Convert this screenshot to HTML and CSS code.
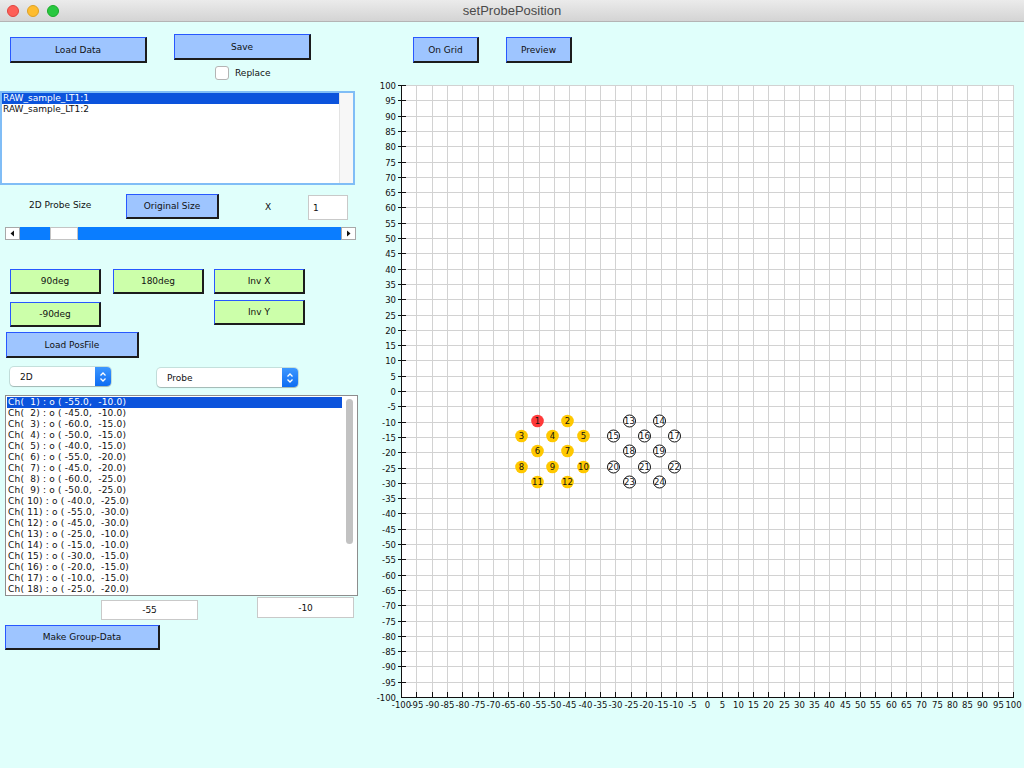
FILE: index.html
```html
<!DOCTYPE html>
<html>
<head>
<meta charset="utf-8">
<title>setProbePosition</title>
<link rel="stylesheet" href="styles.css">
</head>
<body>
<header class="titlebar">
  <div class="lights"><span class="light red"></span><span class="light yellow"></span><span class="light green"></span></div>
  <div class="title">setProbePosition</div>
  <div></div>
</header>
<div class="main">
  <section class="left">
    <div class="row-top">
      <button class="btn blue b-load">Load Data</button>
      <div class="save-col">
        <button class="btn blue b-save">Save</button>
        <label class="check"><span class="box"></span>Replace</label>
      </div>
    </div>

    <div class="datalist">
      <div class="items">
        <div class="item sel">RAW_sample_LT1:1</div>
        <div class="item">RAW_sample_LT1:2</div>
      </div>
      <div class="vscroll"></div>
    </div>

    <div class="row-size">
      <div class="size-label">2D Probe Size</div>
      <button class="btn blue b-orig">Original Size</button>
      <div class="x-label">X</div>
      <div class="field f-scale">1</div>
    </div>

    <div class="slider">
      <div class="arrow"><svg width="5" height="7" viewBox="0 0 5 7"><path d="M4 0.5V6.5L0.5 3.5Z" fill="#111"/></svg></div>
      <div class="track"><div class="thumb"></div></div>
      <div class="arrow"><svg width="5" height="7" viewBox="0 0 5 7"><path d="M1 0.5V6.5L4.5 3.5Z" fill="#111"/></svg></div>
    </div>

    <div class="row-rot1">
      <button class="btn green rot r-a">90deg</button>
      <button class="btn green rot r-b">180deg</button>
      <button class="btn green rot r-c">Inv X</button>
    </div>
    <div class="row-rot2">
      <button class="btn green rot b-m90">-90deg</button>
      <button class="btn green rot b-invy">Inv Y</button>
    </div>

    <button class="btn blue b-pos">Load PosFile</button>

    <div class="row-select">
      <div class="select sel-dim"><span>2D</span><div class="stepper"><svg width="8" height="12" viewBox="0 0 8 12"><path d="M1.5 4.5L4 2L6.5 4.5M1.5 7.5L4 10L6.5 7.5" fill="none" stroke="#fff" stroke-width="1.3"/></svg></div></div>
      <div class="select sel-kind"><span>Probe</span><div class="stepper"><svg width="8" height="12" viewBox="0 0 8 12"><path d="M1.5 4.5L4 2L6.5 4.5M1.5 7.5L4 10L6.5 7.5" fill="none" stroke="#fff" stroke-width="1.3"/></svg></div></div>
    </div>

    <div class="chlist">
      <div class="items">
        <div class="item sel">Ch(  1) : o ( -55.0,  -10.0)</div>
        <div class="item">Ch(  2) : o ( -45.0,  -10.0)</div>
        <div class="item">Ch(  3) : o ( -60.0,  -15.0)</div>
        <div class="item">Ch(  4) : o ( -50.0,  -15.0)</div>
        <div class="item">Ch(  5) : o ( -40.0,  -15.0)</div>
        <div class="item">Ch(  6) : o ( -55.0,  -20.0)</div>
        <div class="item">Ch(  7) : o ( -45.0,  -20.0)</div>
        <div class="item">Ch(  8) : o ( -60.0,  -25.0)</div>
        <div class="item">Ch(  9) : o ( -50.0,  -25.0)</div>
        <div class="item">Ch( 10) : o ( -40.0,  -25.0)</div>
        <div class="item">Ch( 11) : o ( -55.0,  -30.0)</div>
        <div class="item">Ch( 12) : o ( -45.0,  -30.0)</div>
        <div class="item">Ch( 13) : o ( -25.0,  -10.0)</div>
        <div class="item">Ch( 14) : o ( -15.0,  -10.0)</div>
        <div class="item">Ch( 15) : o ( -30.0,  -15.0)</div>
        <div class="item">Ch( 16) : o ( -20.0,  -15.0)</div>
        <div class="item">Ch( 17) : o ( -10.0,  -15.0)</div>
        <div class="item">Ch( 18) : o ( -25.0,  -20.0)</div>
      </div>
      <div class="ch-scroll"><div class="ch-thumb"></div></div>
    </div>

    <div class="row-fields">
      <div class="field f-x">-55</div>
      <div class="field f-y">-10</div>
    </div>

    <button class="btn blue b-group">Make Group-Data</button>
  </section>

  <section class="right">
    <div class="row-right">
      <button class="btn blue b-grid">On Grid</button>
      <button class="btn blue b-prev">Preview</button>
    </div>
    <svg class="plot" width="664" height="660" viewBox="0 0 664 660">
      <rect x="41" y="22" width="613" height="613" fill="#fff"/>
      <path class="grid" d="M41.5 22V634M56.5 22V634M72.5 22V634M87.5 22V634M102.5 22V634M118.5 22V634M133.5 22V634M148.5 22V634M163.5 22V634M179.5 22V634M194.5 22V634M209.5 22V634M225.5 22V634M240.5 22V634M255.5 22V634M271.5 22V634M286.5 22V634M301.5 22V634M316.5 22V634M332.5 22V634M347.5 22V634M362.5 22V634M378.5 22V634M393.5 22V634M408.5 22V634M424.5 22V634M439.5 22V634M454.5 22V634M469.5 22V634M485.5 22V634M500.5 22V634M515.5 22V634M531.5 22V634M546.5 22V634M561.5 22V634M577.5 22V634M592.5 22V634M607.5 22V634M622.5 22V634M638.5 22V634M653.5 22V634M41 22.5H654M41 37.5H654M41 53.5H654M41 68.5H654M41 83.5H654M41 99.5H654M41 114.5H654M41 129.5H654M41 144.5H654M41 160.5H654M41 175.5H654M41 190.5H654M41 206.5H654M41 221.5H654M41 236.5H654M41 252.5H654M41 267.5H654M41 282.5H654M41 297.5H654M41 313.5H654M41 328.5H654M41 343.5H654M41 359.5H654M41 374.5H654M41 389.5H654M41 405.5H654M41 420.5H654M41 435.5H654M41 450.5H654M41 466.5H654M41 481.5H654M41 496.5H654M41 512.5H654M41 527.5H654M41 542.5H654M41 558.5H654M41 573.5H654M41 588.5H654M41 603.5H654M41 619.5H654"/>
      <path class="axis" d="M41.5 22V635M41 634.5H654"/>
      <path class="axis" d="M38 22.5H46M38 37.5H46M38 53.5H46M38 68.5H46M38 83.5H46M38 99.5H46M38 114.5H46M38 129.5H46M38 144.5H46M38 160.5H46M38 175.5H46M38 190.5H46M38 206.5H46M38 221.5H46M38 236.5H46M38 252.5H46M38 267.5H46M38 282.5H46M38 297.5H46M38 313.5H46M38 328.5H46M38 343.5H46M38 359.5H46M38 374.5H46M38 389.5H46M38 405.5H46M38 420.5H46M38 435.5H46M38 450.5H46M38 466.5H46M38 481.5H46M38 496.5H46M38 512.5H46M38 527.5H46M38 542.5H46M38 558.5H46M38 573.5H46M38 588.5H46M38 603.5H46M38 619.5H46M56.5 629V634M72.5 629V634M87.5 629V634M102.5 629V634M118.5 629V634M133.5 629V634M148.5 629V634M163.5 629V634M179.5 629V634M194.5 629V634M209.5 629V634M225.5 629V634M240.5 629V634M255.5 629V634M271.5 629V634M286.5 629V634M301.5 629V634M316.5 629V634M332.5 629V634M347.5 629V634M362.5 629V634M378.5 629V634M393.5 629V634M408.5 629V634M424.5 629V634M439.5 629V634M454.5 629V634M469.5 629V634M485.5 629V634M500.5 629V634M515.5 629V634M531.5 629V634M546.5 629V634M561.5 629V634M577.5 629V634M592.5 629V634M607.5 629V634M622.5 629V634M638.5 629V634M653.5 629V634"/>
      <g class="ylab">
        <text x="36" y="25.5">100</text><text x="36" y="40.5">95</text><text x="36" y="56.5">90</text><text x="36" y="71.5">85</text><text x="36" y="86.5">80</text><text x="36" y="102.5">75</text><text x="36" y="117.5">70</text><text x="36" y="132.5">65</text><text x="36" y="147.5">60</text><text x="36" y="163.5">55</text><text x="36" y="178.5">50</text><text x="36" y="193.5">45</text><text x="36" y="209.5">40</text><text x="36" y="224.5">35</text><text x="36" y="239.5">30</text><text x="36" y="255.5">25</text><text x="36" y="270.5">20</text><text x="36" y="285.5">15</text><text x="36" y="300.5">10</text><text x="36" y="316.5">5</text><text x="36" y="331.5">0</text><text x="36" y="346.5">-5</text><text x="36" y="362.5">-10</text><text x="36" y="377.5">-15</text><text x="36" y="392.5">-20</text><text x="36" y="408.5">-25</text><text x="36" y="423.5">-30</text><text x="36" y="438.5">-35</text><text x="36" y="453.5">-40</text><text x="36" y="469.5">-45</text><text x="36" y="484.5">-50</text><text x="36" y="499.5">-55</text><text x="36" y="515.5">-60</text><text x="36" y="530.5">-65</text><text x="36" y="545.5">-70</text><text x="36" y="561.5">-75</text><text x="36" y="576.5">-80</text><text x="36" y="591.5">-85</text><text x="36" y="606.5">-90</text><text x="36" y="622.5">-95</text><text x="36" y="637.5">-100</text>
      </g>
      <g class="xlab">
        <text x="41.5" y="645">-100</text><text x="56.5" y="645">-95</text><text x="72.5" y="645">-90</text><text x="87.5" y="645">-85</text><text x="102.5" y="645">-80</text><text x="118.5" y="645">-75</text><text x="133.5" y="645">-70</text><text x="148.5" y="645">-65</text><text x="163.5" y="645">-60</text><text x="179.5" y="645">-55</text><text x="194.5" y="645">-50</text><text x="209.5" y="645">-45</text><text x="225.5" y="645">-40</text><text x="240.5" y="645">-35</text><text x="255.5" y="645">-30</text><text x="271.5" y="645">-25</text><text x="286.5" y="645">-20</text><text x="301.5" y="645">-15</text><text x="316.5" y="645">-10</text><text x="332.5" y="645">-5</text><text x="347.5" y="645">0</text><text x="362.5" y="645">5</text><text x="378.5" y="645">10</text><text x="393.5" y="645">15</text><text x="408.5" y="645">20</text><text x="424.5" y="645">25</text><text x="439.5" y="645">30</text><text x="454.5" y="645">35</text><text x="469.5" y="645">40</text><text x="485.5" y="645">45</text><text x="500.5" y="645">50</text><text x="515.5" y="645">55</text><text x="531.5" y="645">60</text><text x="546.5" y="645">65</text><text x="561.5" y="645">70</text><text x="577.5" y="645">75</text><text x="592.5" y="645">80</text><text x="607.5" y="645">85</text><text x="622.5" y="645">90</text><text x="638.5" y="645">95</text><text x="653.5" y="645">100</text>
      </g>
      <g class="pins">
        <circle class="pin-sel" cx="177.5" cy="358" r="6.3"/>
        <circle class="pin-on" cx="207.5" cy="358" r="6.3"/>
        <circle class="pin-on" cx="161.5" cy="373" r="6.3"/>
        <circle class="pin-on" cx="192.5" cy="373" r="6.3"/>
        <circle class="pin-on" cx="223.5" cy="373" r="6.3"/>
        <circle class="pin-on" cx="177.5" cy="388" r="6.3"/>
        <circle class="pin-on" cx="207.5" cy="388" r="6.3"/>
        <circle class="pin-on" cx="161.5" cy="404" r="6.3"/>
        <circle class="pin-on" cx="192.5" cy="404" r="6.3"/>
        <circle class="pin-on" cx="223.5" cy="404" r="6.3"/>
        <circle class="pin-on" cx="177.5" cy="419" r="6.3"/>
        <circle class="pin-on" cx="207.5" cy="419" r="6.3"/>
        <circle class="pin-off" cx="269.5" cy="358" r="6"/>
        <circle class="pin-off" cx="299.5" cy="358" r="6"/>
        <circle class="pin-off" cx="253.5" cy="373" r="6"/>
        <circle class="pin-off" cx="284.5" cy="373" r="6"/>
        <circle class="pin-off" cx="314.5" cy="373" r="6"/>
        <circle class="pin-off" cx="269.5" cy="388" r="6"/>
        <circle class="pin-off" cx="299.5" cy="388" r="6"/>
        <circle class="pin-off" cx="253.5" cy="404" r="6"/>
        <circle class="pin-off" cx="284.5" cy="404" r="6"/>
        <circle class="pin-off" cx="314.5" cy="404" r="6"/>
        <circle class="pin-off" cx="269.5" cy="419" r="6"/>
        <circle class="pin-off" cx="299.5" cy="419" r="6"/>
      </g>
      <g class="pinlab">
        <text x="177.5" y="361">1</text><text x="207.5" y="361">2</text><text x="161.5" y="376">3</text><text x="192.5" y="376">4</text><text x="223.5" y="376">5</text><text x="177.5" y="391">6</text><text x="207.5" y="391">7</text><text x="161.5" y="407">8</text><text x="192.5" y="407">9</text><text x="223.5" y="407">10</text><text x="177.5" y="422">11</text><text x="207.5" y="422">12</text>
        <text x="269.5" y="361">13</text><text x="299.5" y="361">14</text><text x="253.5" y="376">15</text><text x="284.5" y="376">16</text><text x="314.5" y="376">17</text><text x="269.5" y="391">18</text><text x="299.5" y="391">19</text><text x="253.5" y="407">20</text><text x="284.5" y="407">21</text><text x="314.5" y="407">22</text><text x="269.5" y="422">23</text><text x="299.5" y="422">24</text>
      </g>
    </svg>
  </section>
</div>
</body>
</html>
```

FILE: styles.css
```css
* { box-sizing: border-box; margin: 0; padding: 0; }
html, body { width: 1024px; height: 768px; overflow: hidden; }
body {
  background: #e0fffb;
  font-family: "DejaVu Sans", Verdana, sans-serif;
  font-size: 9px;
  color: #111;
}

/* title bar */
.titlebar {
  height: 22px;
  display: grid;
  grid-template-columns: 1fr auto 1fr;
  align-items: center;
  background: linear-gradient(#ebebeb, #d4d4d4);
  border-bottom: 1px solid #b4b4b4;
}
.lights { display: flex; gap: 8px; padding-left: 7px; }
.light { width: 12px; height: 12px; border-radius: 50%; }
.light.red { background: #fe5f57; border: 1px solid #e0443e; }
.light.yellow { background: #febc2e; border: 1px solid #dea123; }
.light.green { background: #28c840; border: 1px solid #1aab29; }
.title {
  font-family: "Liberation Sans", Arial, sans-serif;
  font-size: 13px;
  color: #4a4a4a;
}

.main { display: flex; height: 746px; }
.left { width: 360px; display: flex; flex-direction: column; align-items: flex-start; }
.right { width: 664px; }

/* buttons */
.btn {
  display: flex;
  align-items: center;
  justify-content: center;
  font: inherit;
  color: #111;
  border-style: solid;
  border-width: 1px 2px 2px 1px;
  border-color: #2858ff #1c1c1c #1c1c1c #2858ff;
}
.blue { background: #9ec5ff; }
.green { background: #ccffaa; }

.row-top { display: flex; margin-top: 12px; }
.b-load { width: 137px; height: 26px; margin: 3px 0 0 10px; }
.save-col { display: flex; flex-direction: column; margin-left: 27px; }
.b-save { width: 137px; height: 26px; }
.check { display: flex; align-items: center; gap: 6px; height: 14px; margin: 6px 0 0 41px; }
.box { width: 14px; height: 14px; background: #fff; border: 1px solid #b4b4b4; border-radius: 3px; }

/* data list */
.datalist {
  margin-top: 11px;
  width: 355px;
  height: 94px;
  border: 2px solid #80bdf6;
  background: #fff;
  display: flex;
}
.datalist .items { flex: 1; }
.item { height: 11px; line-height: 11px; padding-left: 1px; white-space: pre; }
.item.sel { background: #0b53dc; color: #fff; }
.vscroll { width: 14px; background: #f7f7f7; border-left: 1px solid #e3e3e3; }

/* probe size row */
.row-size { display: flex; align-items: flex-start; margin-top: 9px; }
.size-label { width: 126px; padding: 6px 0 0 29px; line-height: 11px; }
.b-orig { width: 93px; height: 25px; }
.x-label { width: 89px; padding: 8px 0 0 46px; line-height: 11px; }
.field { background: #fff; border: 1px solid #c9c9c9; display: flex; align-items: center; }
.f-scale { width: 40px; height: 25px; margin-top: 1px; padding-left: 4px; }

/* slider */
.slider { margin: 7px 0 0 5px; width: 351px; height: 13px; display: flex; }
.arrow {
  width: 15px; height: 13px;
  background: #fff;
  border: 1px solid #a8a8a8;
  display: flex; align-items: center; justify-content: center;
}
.track { flex: 1; background: #0a7dff; padding-left: 30px; }
.thumb { width: 28px; height: 13px; background: #fff; border: 1px solid #c4c4c4; }

/* rotation buttons */
.row-rot1 { display: flex; margin-top: 29px; }
.rot { width: 91px; height: 25px; }
.r-a { margin-left: 10px; }
.r-b { margin-left: 12px; }
.r-c { margin-left: 10px; }
.row-rot2 { display: flex; align-items: flex-start; margin-top: 6px; }
.b-m90 { margin: 2px 0 0 10px; }
.b-invy { margin-left: 113px; }

.b-pos { width: 133px; height: 26px; margin: 5px 0 0 6px; }

/* selects */
.row-select { display: flex; align-items: flex-start; margin-top: 9px; }
.select {
  height: 19px;
  background: #fff;
  border-radius: 4px;
  box-shadow: 0 0 0 1px rgba(0,0,0,0.12), 0 1px 1px rgba(0,0,0,0.18);
  display: flex;
  align-items: center;
}
.select span { flex: 1; padding-left: 10px; }
.sel-dim { width: 101px; margin-left: 10px; }
.sel-kind { width: 141px; margin: 1px 0 0 46px; }
.stepper {
  width: 16px; height: 19px;
  background: linear-gradient(#3c97ff, #0e6cf2);
  border-radius: 0 4px 4px 0;
  display: flex; align-items: center; justify-content: center;
}

/* channel list */
.chlist {
  margin: 8px 0 0 5px;
  width: 353px;
  height: 201px;
  border: 1px solid #8d8d8d;
  background: #fff;
  display: flex;
  overflow: hidden;
}
.chlist .items { flex: 1; padding: 1px 0 0 1px; overflow: hidden; letter-spacing: 0.2px; }
.ch-scroll { width: 15px; display: flex; justify-content: center; padding-top: 3px; }
.ch-thumb { width: 7px; height: 145px; background: #c2c2c2; border-radius: 4px; }

.row-fields { display: flex; align-items: flex-start; margin-top: 1px; }
.f-x { width: 97px; height: 20px; margin: 3px 0 0 101px; justify-content: center; }
.f-y { width: 97px; height: 21px; margin-left: 59px; justify-content: center; }

.b-group { width: 155px; height: 25px; margin: 5px 0 0 5px; }

/* right side */
.row-right { display: flex; margin-top: 15px; }
.b-grid { width: 66px; height: 26px; margin-left: 53px; }
.b-prev { width: 66px; height: 26px; margin-left: 27px; }

.plot { display: block; width: 664px; height: 660px; }
.grid { stroke: #d2d2d2; stroke-width: 1; fill: none; }
.axis { stroke: #111; stroke-width: 1; fill: none; }
.ylab text { font-size: 8.5px; text-anchor: end; fill: #111; }
.xlab text { font-size: 8.5px; text-anchor: middle; fill: #111; }
.pin-sel { fill: #ff3a3a; }
.pin-on { fill: #ffc800; }
.pin-off { fill: #fff; stroke: #111; stroke-width: 1; }
.pinlab text { font-size: 8.5px; text-anchor: middle; fill: #111; }
```
